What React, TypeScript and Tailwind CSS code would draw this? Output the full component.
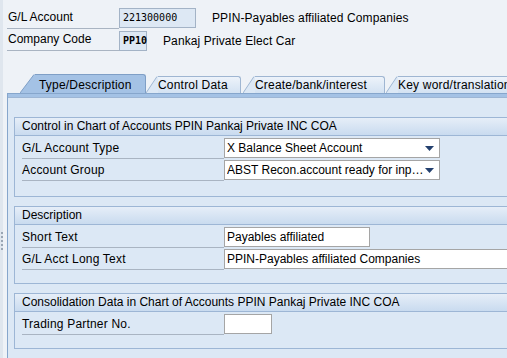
import React from "react";

const font = "font-['Liberation_Sans',Arial,sans-serif]";
const mono = "font-['DejaVu_Sans_Mono','Liberation_Mono',monospace]";

type TabProps = { label: string; active?: boolean; width: number; gap: number; pad: number };

function Tab(props: TabProps) {
  const slant = props.active ? 15 : 12;
  const h = props.active ? 19 : 17;
  const fill = props.active ? "#a4c2e5" : "#dce8f5";
  const stroke = props.active ? "#7f9fc6" : "#9fb6d2";
  return (
    <div className="flex items-end shrink-0" style={{ height: h, marginRight: props.gap }}>
      <svg width={slant} height={h} viewBox={`0 0 ${slant} ${h}`} className="block shrink-0">
        <polygon points={`0,${h} ${slant - 1},0.5 ${slant},0.5 ${slant},${h}`} fill={fill} />
        <line x1="0" y1={h} x2={slant - 1} y2="0.5" stroke={stroke} />
      </svg>
      <div
        style={{ width: props.width, paddingLeft: props.pad }}
        className={
          props.active
            ? "h-full border-t border-r border-[#7f9fc6] rounded-tr-[3px] bg-[#a4c2e5] pt-[1px] text-[12px] leading-[18px] tracking-[0.2px] whitespace-nowrap"
            : "h-full border-t border-r border-[#9fb6d2] rounded-tr-[3px] bg-gradient-to-b from-[#edf3fa] to-[#d3e2f2] text-[12px] leading-[16px] tracking-[0.2px] whitespace-nowrap overflow-hidden"
        }
      >
        {props.label}
      </div>
    </div>
  );
}

function Row(props: { label: string; children: React.ReactNode }) {
  return (
    <div className="flex h-[22px]">
      <div className="w-[202px] shrink-0 h-[22px] border-b border-[#a9b4c2] text-[12px] leading-[22px] tracking-[0.2px]">
        {props.label}
      </div>
      <div className="h-[22px] flex items-center shrink-0">{props.children}</div>
    </div>
  );
}

function Group(props: { title: string; bottom: number; children: React.ReactNode }) {
  return (
    <div className="ml-[6px] border border-r-0 border-[#9db6d5]">
      <div className="h-[18px] border-b border-[#9db6d5] bg-gradient-to-b from-[#e6eef8] to-[#c9dbef] pl-[7px] text-[12px] leading-[17px] whitespace-nowrap">
        {props.title}
      </div>
      <div className="pl-[7px] pt-[1px]" style={{ paddingBottom: props.bottom }}>
        {props.children}
      </div>
    </div>
  );
}

function Dropdown(props: { value: string; width: number }) {
  return (
    <div
      style={{ width: props.width }}
      className="h-[20px] border border-[#a5a5a5] bg-white flex items-center pl-[2px] pr-[5px] text-[12px]"
    >
      <span className="flex-1 whitespace-nowrap overflow-hidden">{props.value}</span>
      <svg width="9" height="5" viewBox="0 0 9 5" className="shrink-0">
        <polygon points="0,0 9,0 4.5,5" fill="#23406e" />
      </svg>
    </div>
  );
}

function TextBox(props: { value?: string; width: number }) {
  return (
    <div
      style={{ width: props.width }}
      className="h-[20px] border border-[#a5a5a5] bg-white pl-[2px] text-[12px] leading-[18px] whitespace-nowrap overflow-hidden"
    >
      {props.value}
    </div>
  );
}

export default function App() {
  return (
    <div className={`w-[507px] h-[358px] overflow-hidden bg-[#eef2f7] flex text-black ${font}`}>
      <div className="w-[3px] shrink-0 bg-[#dfe6ee] flex flex-col items-start pt-[232px] gap-[2px]">
        {[0, 1, 2, 3, 4].map((i) => (
          <div key={i} className="w-[2px] h-[2px] bg-[#9aa6b4] ml-[1px]" />
        ))}
      </div>
      <div className="flex-1 min-w-0 flex flex-col">
        <div className="pl-[4px] pt-[7px]">
          <div className="flex items-center h-[22px]">
            <div className="w-[112px] h-[22px] border-b border-[#a9b4c2] pl-[1px] text-[12px] leading-[20px]">
              G/L Account
            </div>
            <div className={`w-[77px] h-[20px] border border-[#a3b3c6] bg-[#dde8f4] pl-[3px] text-[10px] leading-[18px] ${mono}`}>
              221300000
            </div>
            <div className="ml-[16px] text-[12px] tracking-[0.1px]">PPIN-Payables affiliated Companies</div>
          </div>
          <div className="flex items-center h-[23px]">
            <div className="w-[112px] h-[22px] border-b border-[#a9b4c2] pl-[1px] text-[12px] leading-[20px] self-start">
              Company Code
            </div>
            <div className={`w-[28px] h-[20px] border border-[#a3b3c6] bg-[#dde8f4] pl-[3px] text-[10px] font-bold leading-[18px] ${mono}`}>
              PP10
            </div>
            <div className="ml-[16px] text-[12px] tracking-[0.1px]">Pankaj Private Elect Car</div>
          </div>
        </div>
        <div className="mt-[22px] flex items-end pl-[17px] h-[19px]">
          <Tab label="Type/Description" active width={111} gap={0} pad={4} />
          <Tab label="Control Data" width={83} gap={2} pad={0} />
          <Tab label="Create/bank/interest" width={130} gap={1} pad={0} />
          <Tab label="Key word/translation" width={130} gap={0} pad={0} />
        </div>
        <div className="flex-1 ml-[4px] border-l border-t border-[#86a6cc] bg-[#dce8f5]">
          <div className="h-[3px] bg-[#a4c2e5] border-b border-[#9db6d5] box-content" />
          <div className="pt-[19px] flex flex-col gap-[9px]">
            <Group title="Control in Chart of Accounts PPIN Pankaj Private INC COA" bottom={15}>
              <Row label="G/L Account Type">
                <Dropdown value="X Balance Sheet Account" width={216} />
              </Row>
              <Row label="Account Group">
                <Dropdown value="ABST Recon.account ready for inp…" width={216} />
              </Row>
            </Group>
            <Group title="Description" bottom={13}>
              <Row label="Short Text">
                <TextBox value="Payables affiliated" width={146} />
              </Row>
              <Row label="G/L Acct Long Text">
                <TextBox value="PPIN-Payables affiliated Companies" width={300} />
              </Row>
            </Group>
            <Group title="Consolidation Data in Chart of Accounts PPIN Pankaj Private INC COA" bottom={13}>
              <Row label="Trading Partner No.">
                <TextBox width={48} />
              </Row>
            </Group>
          </div>
        </div>
      </div>
    </div>
  );
}
